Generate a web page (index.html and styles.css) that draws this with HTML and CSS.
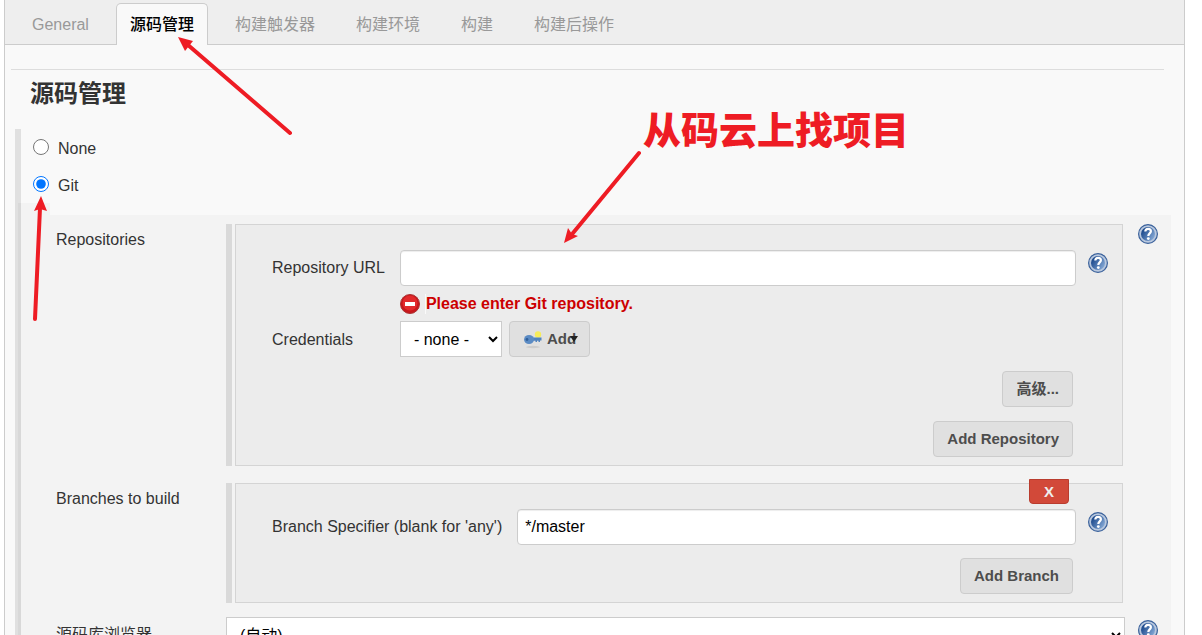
FILE: index.html
```html
<!DOCTYPE html>
<html lang="zh-CN">
<head>
    <meta charset="UTF-8">
    <meta name="viewport" content="width=device-width, initial-scale=1.0">
    <title>源码管理</title>
    <link rel="stylesheet" href="styles.css">
</head>
<body>
    <svg class="defs" width="0" height="0" aria-hidden="true">
        <defs>
            <linearGradient id="help-fill" x1="0" y1="0" x2="1" y2="0.6">
                <stop offset="0.2" stop-color="#1f4c8f"/>
                <stop offset="1" stop-color="#7fa3d1"/>
            </linearGradient>
            <symbol id="help" viewBox="0 0 20 20">
                <circle cx="10" cy="10" r="9.4" fill="#b9c8de" stroke="#3a619b" stroke-width="1.2"/>
                <circle cx="10" cy="10" r="7" fill="url(#help-fill)"/>
                <path d="M7.3 7.6C7.3 5.6 8.4 4.9 10 4.9C11.8 4.9 12.9 5.8 12.9 7.3C12.9 9.4 10.3 9.4 10.3 12" fill="none" stroke="#fff" stroke-width="2.2"/>
                <circle cx="10.3" cy="14.6" r="1.4" fill="#fff"/>
            </symbol>
        </defs>
    </svg>

    <form class="config">
        <nav class="tabs">
            <a class="tab" href="#general">General</a>
            <a class="tab active" href="#scm">源码管理</a>
            <a class="tab" href="#triggers">构建触发器</a>
            <a class="tab" href="#env">构建环境</a>
            <a class="tab" href="#build">构建</a>
            <a class="tab" href="#post">构建后操作</a>
        </nav>

        <h1 class="section-title" id="scm">源码管理</h1>

        <div class="scm">
            <label class="choice"><input type="radio" name="scm"><span>None</span></label>
            <label class="choice"><input type="radio" name="scm" checked><span>Git</span></label>

            <div class="git">
                <div class="git-body">
                    <div class="row">
                        <div class="row-label">Repositories</div>
                        <div class="chunk">
                            <div class="box">
                                <div class="fields">
                                    <label class="field-label" for="url">Repository URL</label>
                                    <input class="text" type="text" id="url">
                                    <svg class="help"><use href="#help"/></svg>

                                    <div class="error">
                                        <svg width="20" height="20" viewBox="0 0 20 20">
                                            <circle cx="10" cy="10" r="9.5" fill="#c8171c" stroke="#a33" stroke-width="1"/>
                                            <circle cx="10" cy="9" r="7.5" fill="#e22a2c"/>
                                            <rect x="5" y="8" width="10" height="4" fill="#fff"/>
                                        </svg>
                                        <span>Please enter Git repository.</span>
                                    </div>

                                    <label class="field-label" for="credentials">Credentials</label>
                                    <div class="credentials">
                                        <select class="select" id="credentials"><option>- none -</option></select>
                                        <button type="button" class="btn btn-key">
                                            <svg width="20" height="20" viewBox="0 0 20 20">
                                                <ellipse cx="10" cy="18" rx="7" ry="1.2" fill="#ccc"/>
                                                <circle cx="15" cy="5.5" r="3.2" fill="#f6ec5a"/>
                                                <path d="M8 8.500H18.500V11.500H17V13H15.500V11.800H14V13H12.500V11.800H8z" fill="#5183bd"/>
                                                <ellipse cx="6" cy="10.500" rx="5" ry="4.600" fill="#5b8bc4"/>
                                                <circle cx="4" cy="10.500" r="1.400" fill="#2f5e99"/>
                                            </svg>
                                            <span>Add</span>
                                            <i class="caret"></i>
                                        </button>
                                    </div>
                                </div>
                                <div class="actions">
                                    <button type="button" class="btn">高级...</button>
                                    <button type="button" class="btn">Add Repository</button>
                                </div>
                            </div>
                        </div>
                        <svg class="help"><use href="#help"/></svg>
                    </div>

                    <div class="row">
                        <div class="row-label">Branches to build</div>
                        <div class="chunk">
                            <div class="box">
                                <button type="button" class="delete">X</button>
                                <div class="fields">
                                    <label class="field-label" for="branch">Branch Specifier (blank for 'any')</label>
                                    <input class="text" type="text" id="branch" value="*/master">
                                    <svg class="help"><use href="#help"/></svg>
                                </div>
                                <div class="actions">
                                    <button type="button" class="btn">Add Branch</button>
                                </div>
                            </div>
                        </div>
                    </div>

                    <div class="row row-browser">
                        <label class="row-label" for="browser">源码库浏览器</label>
                        <select class="select" id="browser"><option>(自动)</option></select>
                        <svg class="help"><use href="#help"/></svg>
                    </div>
                </div>
            </div>
        </div>
    </form>

    <svg class="arrows" width="700" height="330" viewBox="0 0 700 330" aria-hidden="true">
        <path d="M290 133L188 45M639 153L573 233M35 319L40 208"/>
        <polygon points="178,37 193,41 189,46 185,51"/>
        <polygon points="564,243 568,228 572,234 578,236"/>
        <polygon points="41,196 34,211 40,209 47,211"/>
    </svg>
    <p class="note">从码云上找项目</p>
</body>
</html>
```

FILE: styles.css
```css
* {
    box-sizing: border-box;
}
body {
    margin: 0;
    height: 100vh;
    overflow: hidden;
    position: relative;
    background: #fff;
    color: #333;
    font: 16px/20px "Liberation Sans", Arial, "Noto Sans CJK SC", sans-serif;
}
.defs {
    position: absolute;
}
.config {
    margin: 0 17px 0 4px;
    border: 1px solid #ccc;
    border-width: 0 1px;
    background: #f9f9f9;
}

/* tabs */
.tabs {
    display: flex;
    gap: 13px;
    height: 45px;
    padding: 3px 13px 0;
    background: #eee;
    border-bottom: 1px solid #ccc;
}
.tab {
    height: 42px;
    padding: 0 13px;
    border: 1px solid transparent;
    border-bottom: 0;
    border-radius: 5px 5px 0 0;
    line-height: 42px;
    color: #999;
    text-decoration: none;
}
.tab.active {
    background: #f9f9f9;
    border-color: #ccc;
    color: #000;
    font-weight: 500;
}

.section-title {
    margin: 24px 20px 20px 6px;
    padding: 9px 19px 0;
    border-top: 1px solid #ddd;
    font-size: 24px;
    line-height: 30px;
}

/* source control choices */
.scm {
    margin: 0 13px 0 10px;
    border-left: 6px solid #e0e0e0;
}
.choice {
    display: flex;
    align-items: flex-start;
    gap: 9px;
    height: 37px;
    padding: 10px 0 0 12px;
}
.choice input {
    width: 16px;
    height: 16px;
    margin: 0;
}
.git {
    margin-left: -3px;
    border-left: 3px solid #d8d8d8;
}
.git::before {
    content: "";
    display: block;
    width: 29px;
    height: 12px;
    background: #f3f3f3;
}
.git-body {
    padding: 9px 13px 20px 35px;
    background: #f3f3f3;
}
.row {
    display: grid;
    grid-template-columns: 170px 1fr 20px;
    align-items: start;
    margin-bottom: 17px;
}
.row-label {
    line-height: 32px;
}
.chunk {
    margin-right: 15px;
    padding-left: 3px;
    border-left: 6px solid #d9d9d9;
}
.box {
    position: relative;
    padding: 25px 14px 8px 36px;
    background: #ececec;
    border: 1px solid #d4d4d4;
}
.row-browser {
    margin-top: -3px;
}
.row-browser .row-label {
    line-height: 36px;
}
.row-browser .select {
    margin-right: 13px;
}
.row-browser .help {
    margin-top: 3px;
}

/* fields */
.fields {
    display: grid;
    grid-template-columns: auto 1fr 32px;
    align-items: center;
}
.field-label {
    grid-column: 1;
    padding-right: 15px;
    line-height: 36px;
}
.text {
    width: 100%;
    height: 36px;
    padding: 0 7px;
    border: 1px solid #ccc;
    border-radius: 4px;
    box-shadow: inset 0 1px 1px rgba(0, 0, 0, 0.075);
    font: inherit;
    color: #000;
}
.help {
    width: 20px;
    height: 20px;
}
.fields .help {
    justify-self: end;
    align-self: start;
    margin-top: 3px;
}
.error {
    grid-column: 2;
    display: flex;
    align-items: center;
    gap: 5px;
    margin: 8px 0 7px;
    color: #c00;
    font-weight: bold;
}
.error span {
    border-left: 1px solid #fafafa;
}
.credentials {
    grid-column: 2;
    display: flex;
    gap: 7px;
    margin-bottom: 1px;
}
.select {
    height: 36px;
    padding: 0 0 0 9px;
    background: #fff;
    border: 1px solid #ccc;
    border-radius: 0;
    font: inherit;
    color: #000;
}
#credentials {
    width: 102px;
}
.btn {
    height: 36px;
    padding: 0 13px;
    background: #e0e0e0;
    border: 1px solid #ccc;
    border-radius: 4px;
    color: #4d4d4d;
    font: bold 15px/20px "Liberation Sans", Arial, "Noto Sans CJK SC", sans-serif;
}
.btn-key {
    position: relative;
    display: flex;
    align-items: center;
    gap: 4px;
}
.caret {
    position: absolute;
    right: 11px;
    top: 14px;
    border: 4px solid transparent;
    border-top: 6px solid #222;
    border-bottom: 0;
}
.actions {
    display: flex;
    flex-direction: column;
    align-items: flex-end;
    gap: 14px;
    margin: 13px 35px 0 0;
}
.delete {
    position: absolute;
    right: 53px;
    top: -5px;
    width: 40px;
    height: 25px;
    padding: 0;
    background: #d24939;
    border: 1px solid #b93c2e;
    border-radius: 0 0 4px 4px;
    color: #eee;
    font: bold 15px/20px "Liberation Sans", Arial, sans-serif;
}

/* notes drawn over the form */
.arrows {
    position: absolute;
    left: 0;
    top: 0;
    pointer-events: none;
    fill: #ee1c24;
}
.arrows path {
    fill: none;
    stroke: #ee1c24;
    stroke-width: 4;
    stroke-linecap: round;
}
.note {
    position: absolute;
    left: 643px;
    top: 103px;
    margin: 0;
    color: #ee1c24;
    font: 900 38px/50px "Noto Sans CJK SC", sans-serif;
}
```
